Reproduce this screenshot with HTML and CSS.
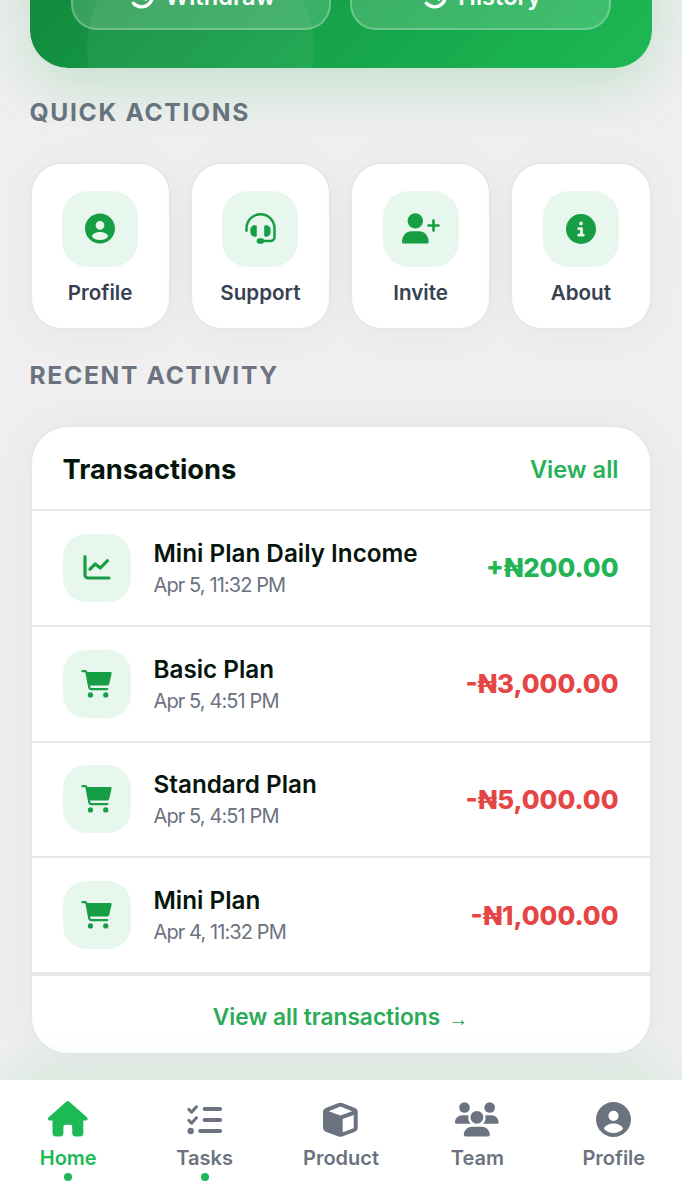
FILE: index.html
```
<!DOCTYPE html>
<html lang="en">
<head>
    <meta charset="utf-8" />
    <title>Home</title>
    <link rel="stylesheet" href="styles.css">
</head>
<body>
<svg class="defs" width="0" height="0" aria-hidden="true">
    <symbol id="user" viewBox="2 2 20 20">
        <path d="M12 2C6.48 2 2 6.48 2 12s4.48 10 10 10 10-4.48 10-10S17.52 2 12 2zm0 5a2.9 2.9 0 1 1 0 5.8 2.9 2.9 0 1 1 0-5.8zm0 12.7c-2.5 0-4.2-.9-5.5-2.4.6-1.9 3-3 5.5-3s4.9 1.1 5.5 3c-1.3 1.5-3 2.4-5.5 2.4z"/>
    </symbol>
    <symbol id="cart" viewBox="0 0 30.5 28">
        <path d="M5.5 2H29a1.3 1.3 0 0 1 1.3 1.7L28 13.7a2.5 2.5 0 0 1-2.4 1.9H7.8z"/>
        <path class="line" stroke-width="2.2" d="M1.2 1.2H3.7a1.5 1.5 0 0 1 1.5 1.2L8 17.3a2.2 2.2 0 0 0 2.2 1.8H26"/>
        <circle cx="9.2" cy="24.9" r="2.6"/>
        <circle cx="24.5" cy="24.9" r="2.6"/>
    </symbol>
    <symbol id="history" viewBox="0 0 28 28">
        <path class="line" stroke-width="3.6" d="M4.5 6.5A11.7 11.7 0 1 1 4.7 21.7"/>
        <path class="line" stroke-width="3" d="M14 7v7l4.2 3.6"/>
    </symbol>
</svg>
<div class="app">
    <section class="balance">
        <div class="balance-actions">
            <a class="balance-btn"><svg width="26" height="26"><use href="#history"/></svg>Withdraw</a>
            <a class="balance-btn"><svg width="26" height="26"><use href="#history"/></svg>History</a>
        </div>
    </section>

    <h2 class="section-title">QUICK ACTIONS</h2>
    <div class="quick">
        <a class="quick-card">
            <span class="quick-icon"><svg width="30" height="31"><use href="#user"/></svg></span>
            Profile
        </a>
        <a class="quick-card">
            <span class="quick-icon">
                <svg width="31" height="31" viewBox="0 0 31 31">
                    <path class="line" stroke-width="2.5" d="M1.5 17.8V15.3A14 14 0 0 1 29.5 15.3V24a4 4 0 0 1-4 4H17"/>
                    <path d="M10.5 12.3h-1C7 12.3 5.3 14.5 5.3 18s1.7 5.7 4.2 5.7h1a1.3 1.3 0 0 0 1.3-1.3v-8.8a1.3 1.3 0 0 0-1.3-1.3zM20.5 12.3h1c2.5 0 4.2 2.2 4.2 5.7s-1.7 5.7-4.2 5.7h-1a1.3 1.3 0 0 1-1.3-1.3v-8.8a1.3 1.3 0 0 1 1.3-1.3z"/>
                    <rect x="11.7" y="25.3" width="7.6" height="5.4" rx="2.7"/>
                </svg>
            </span>
            Support
        </a>
        <a class="quick-card">
            <span class="quick-icon">
                <svg width="38" height="31" viewBox="0 0 38 31">
                    <circle cx="13.3" cy="7.9" r="7.7"/>
                    <path d="M9.5 18.3h7.6c5.5 0 9.6 4.7 9.6 10.6a1.7 1.7 0 0 1-1.7 1.7H1.7A1.7 1.7 0 0 1 0 28.9C0 23 4 18.3 9.5 18.3z"/>
                    <path class="line" stroke-width="2.7" d="M31.5 7.500v10M26.5 12.500h10"/>
                </svg>
            </span>
            Invite
        </a>
        <a class="quick-card">
            <span class="quick-icon">
                <svg width="30" height="30" viewBox="0 0 512 512">
                    <path d="M256 512A256 256 0 1 0 256 0a256 256 0 1 0 0 512zM216 336h24V272H216c-13.3 0-24-10.7-24-24s10.7-24 24-24h48c13.3 0 24 10.7 24 24v88h8c13.3 0 24 10.7 24 24s-10.7 24-24 24H216c-13.3 0-24-10.7-24-24s10.7-24 24-24zm40-208a32 32 0 1 1 0 64 32 32 0 1 1 0-64z"/>
                </svg>
            </span>
            About
        </a>
    </div>

    <h2 class="section-title recent">RECENT ACTIVITY</h2>
    <section class="tx-card">
        <header class="tx-header">
            <h3>Transactions</h3>
            <a>View all</a>
        </header>
        <div class="tx">
            <span class="tx-icon">
                <svg width="28" height="25" viewBox="0 0 28 25">
                    <path class="line" stroke-width="3.2" d="M2 1.7V20a3 3 0 0 0 3 3H26M7 14.2L12.3 9l5 4 7.2-7.3"/>
                </svg>
            </span>
            <div class="tx-info">
                <div class="tx-name">Mini Plan Daily Income</div>
                <div class="tx-date">Apr 5, 11:32 PM</div>
            </div>
            <div class="tx-amount credit">+₦200.00</div>
        </div>
        <div class="tx">
            <span class="tx-icon"><svg width="31" height="28"><use href="#cart"/></svg></span>
            <div class="tx-info">
                <div class="tx-name">Basic Plan</div>
                <div class="tx-date">Apr 5, 4:51 PM</div>
            </div>
            <div class="tx-amount debit">-₦3,000.00</div>
        </div>
        <div class="tx">
            <span class="tx-icon"><svg width="31" height="28"><use href="#cart"/></svg></span>
            <div class="tx-info">
                <div class="tx-name">Standard Plan</div>
                <div class="tx-date">Apr 5, 4:51 PM</div>
            </div>
            <div class="tx-amount debit">-₦5,000.00</div>
        </div>
        <div class="tx">
            <span class="tx-icon"><svg width="31" height="28"><use href="#cart"/></svg></span>
            <div class="tx-info">
                <div class="tx-name">Mini Plan</div>
                <div class="tx-date">Apr 4, 11:32 PM</div>
            </div>
            <div class="tx-amount debit">-₦1,000.00</div>
        </div>
        <a class="tx-footer">View all transactions <span class="arrow">→</span></a>
    </section>

    <nav class="nav">
        <a class="nav-item active dot">
            <svg width="40" height="36" viewBox="0 0 40 36">
                <path d="M18.3.7a2.2 2.2 0 0 1 3 0L38.9 16.2c1.5 1.4.6 3.4-1.3 3.4H35.3V32a3.5 3.5 0 0 1-3.5 3.5H27.7a3.5 3.5 0 0 1-3.5-3.5V25.7a1.9 1.9 0 0 0-1.9-1.9H17.3a1.9 1.9 0 0 0-1.9 1.9V32a3.5 3.5 0 0 1-3.5 3.5H8A3.5 3.5 0 0 1 4.5 32V19.6H2C.1 19.6-.8 17.6.7 16.2z"/>
            </svg>
            Home
        </a>
        <a class="nav-item dot">
            <svg width="36" height="36" viewBox="0 -3.5 36 36">
                <path class="line" stroke-width="4.2" d="M17.7 4.5H33M17.7 15.5H33M13.3 26.5H33"/>
                <path class="line" stroke-width="3.1" d="M1.9 5l2.7 2.7 4.8-5.4M1.9 16l2.7 2.7 4.8-5.4"/>
                <circle cx="3.7" cy="26.5" r="3.2"/>
            </svg>
            Tasks
        </a>
        <a class="nav-item">
            <svg width="35" height="36" viewBox="0 -1.5 35 36">
                <path fill-rule="evenodd" d="M15.6.5a5 5 0 0 1 3.6 0L32.1 5.4A4 4 0 0 1 34.7 9.2V25.5a4 4 0 0 1-2.6 3.8L19.2 34a5 5 0 0 1-3.6 0L2.7 29.3A4 4 0 0 1 0 25.5V9.2A4 4 0 0 1 2.7 5.4zM17.4 4L5.7 8.7 17.4 13.1 29.1 8.7zM19.7 16.5V29.8L30.7 25.7V12.4z"/>
            </svg>
            Product
        </a>
        <a class="nav-item">
            <svg width="44" height="36" viewBox="0 -1 44 36">
                <circle cx="9.5" cy="5.5" r="5.3"/>
                <circle cx="34.7" cy="5.5" r="5.3"/>
                <circle cx="21.9" cy="15.3" r="6.4"/>
                <path d="M7.5 13.3h4a9 9 0 0 1 2.1.3 9 9 0 0 0 2 8.2H1.4A1.4 1.4 0 0 1 0 20.4C0 16.5 3.3 13.3 7.5 13.3zM32.3 13.3h4c4.2 0 7.3 3.2 7.3 7.1a1.4 1.4 0 0 1-1.4 1.4H28.3a9 9 0 0 0 1.9-8.2 9 9 0 0 1 2.1-.3zM16.6 24.7h10.6c4.3 0 7.6 3.8 7.6 8.1a1.7 1.7 0 0 1-1.7 1.7H10.5a1.7 1.7 0 0 1-1.7-1.7c0-4.3 3.5-8.1 7.8-8.1z"/>
            </svg>
            Team
        </a>
        <a class="nav-item">
            <svg width="35" height="36" viewBox="0 -1 35 36"><use href="#user" width="35" height="35"/></svg>
            Profile
        </a>
    </nav>
</div>
</body>
</html>
```
FILE: styles.css
```
* { box-sizing: border-box; }
body {
    margin: 0;
    background: #efefef;
    font-family: Inter, "Liberation Sans", sans-serif;
    color: #06150c;
}
svg { fill: currentColor; flex: none; }
.defs { display: block; }
.line {
    fill: none;
    stroke: currentColor;
    stroke-linecap: round;
    stroke-linejoin: round;
}
.app {
    height: 1200px;
    overflow: hidden;
    display: flex;
    flex-direction: column;
    padding: 0 30.5px 0 29.5px;
}

.balance {
    position: relative;
    flex: none;
    height: 288px;
    margin-top: -220px;
    padding: 0 41px 38px;
    display: flex;
    align-items: flex-end;
    border-radius: 38px;
    overflow: hidden;
    background: linear-gradient(135deg, #0f7a34 0%, #16a34a 60%, #1db954 100%);
    box-shadow: 0 15px 60px rgba(22,163,74,.22);
}
.balance::before {
    content: "";
    position: absolute;
    left: 57px;
    bottom: -94px;
    width: 227px;
    height: 227px;
    border-radius: 50%;
    background: rgba(255,255,255,.06);
}
.balance-actions {
    position: relative;
    flex: 1;
    display: grid;
    grid-template-columns: 1fr 1fr;
    gap: 19px;
}
.balance-btn {
    height: 68px;
    display: flex;
    align-items: center;
    justify-content: center;
    gap: 10px;
    padding-left: 3px;
    border: 2px solid rgba(255,255,255,.25);
    border-radius: 26px;
    background: rgba(255,255,255,.16);
    color: #fff;
    font-size: 23.6px;
    font-weight: 600;
}

.section-title {
    margin: 28px 0 0;
    font-size: 24.6px;
    line-height: 32px;
    font-weight: 700;
    letter-spacing: 1.7px;
    color: #6b7280;
}
.recent { margin-top: 29px; }
.quick {
    display: grid;
    grid-template-columns: repeat(4, 1fr);
    gap: 19px;
    margin-top: 34px;
}
.quick-card {
    height: 168px;
    padding-top: 27px;
    display: flex;
    flex-direction: column;
    align-items: center;
    gap: 13px;
    border: 2px solid #e5e7eb;
    border-radius: 32px;
    background: #fff;
    box-shadow: 0 4px 38px rgba(22,120,60,.05);
    font-size: 20.6px;
    line-height: 26px;
    font-weight: 600;
    color: #374151;
}
.quick-icon, .tx-icon {
    display: flex;
    align-items: center;
    justify-content: center;
    background: #e8f7ee;
    color: #169e45;
}
.quick-icon {
    width: 76px;
    height: 76px;
    padding-bottom: 1px;
    border-radius: 26px;
}

.tx-card {
    flex: none;
    height: 630px;
    margin-top: 34px;
    display: flex;
    flex-direction: column;
    border: 2px solid #e5e7eb;
    border-radius: 38px;
    background: #fff;
    box-shadow: 0 4px 45px rgba(22,120,60,.06);
}
.tx-header {
    height: 84px;
    padding: 2px 31px 0;
    display: flex;
    align-items: center;
    justify-content: space-between;
    border-bottom: 2px solid #e5e7eb;
}
.tx-header h3 {
    margin: 0;
    font-size: 27.3px;
    font-weight: 700;
}
.tx-header a {
    font-size: 23.6px;
    font-weight: 600;
    color: #27b259;
}
.tx {
    height: 115.75px;
    padding: 0 31px;
    display: flex;
    align-items: center;
    border-bottom: 2px solid #e5e7eb;
}
.tx-icon {
    width: 68px;
    height: 68px;
    margin-right: 23px;
    border-radius: 23px;
}
.tx-info {
    flex: 1;
    padding-top: 3px;
}
.tx-name {
    font-size: 24.25px;
    line-height: 31px;
    font-weight: 600;
}
.tx-date {
    font-size: 20px;
    line-height: 32px;
    letter-spacing: -.9px;
    color: #6b7280;
}
.tx-amount {
    font-size: 25.8px;
    font-weight: 800;
}
.credit { color: #22b455; }
.debit { color: #e54545; }
.tx-footer {
    flex: 1;
    padding-top: 4px;
    display: flex;
    align-items: center;
    justify-content: center;
    gap: 8px;
    border-top: 2px solid #e5e7eb;
    font-size: 22.7px;
    font-weight: 600;
    color: #2bab58;
}
.arrow {
    font: 20px "Liberation Sans", sans-serif;
    padding-top: 5px;
}

.nav {
    position: relative;
    flex: none;
    height: 120px;
    margin: 25px -30.5px 0 -29.5px;
    padding-top: 21px;
    display: grid;
    grid-template-columns: repeat(5, 1fr);
    background: #fff;
    box-shadow: 0 -8px 45px rgba(29,185,84,.12);
}
.nav-item {
    position: relative;
    display: flex;
    flex-direction: column;
    align-items: center;
    height: 80px;
    gap: 8px;
    font-size: 20px;
    line-height: 26px;
    font-weight: 600;
    color: #6b7280;
}
.active { color: #1db954; }
.dot::after {
    content: "";
    position: absolute;
    bottom: 0;
    width: 8px;
    height: 8px;
    border-radius: 50%;
    background: #1db954;
}
```
